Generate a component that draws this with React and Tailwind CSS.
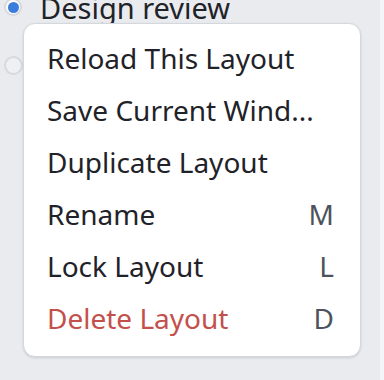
import { useState } from 'react';

const items = [
    { label: 'Reload This Layout' },
    { label: 'Save Current Wind...' },
    { label: 'Duplicate Layout' },
    { label: 'Rename', key: 'M' },
    { label: 'Lock Layout', key: 'L' },
    { label: 'Delete Layout', key: 'D', danger: true },
];

const App = () => {
    const [selected] = useState('design');

    return (
        <div className="relative flex w-[384px] h-[380px] overflow-hidden bg-[#e9ebef] font-['Noto_Sans',sans-serif]">
            {/* Layout list behind the menu */}
            <div className="flex-1 flex flex-col gap-[20px] pl-[4px] -mt-[12px]">
                <div className="flex items-center gap-[18px] h-[38px]">
                    <span className="w-[18px] h-[18px] rounded-full bg-white border-2 border-[#d6d9df] flex items-center justify-center">
                        <span className={`w-[11px] h-[11px] rounded-full ${selected === 'design' ? 'bg-[#3b7ddd]' : ''}`}></span>
                    </span>
                    <span className="text-[29px] text-[#1f2329] leading-none">Design review</span>
                </div>
                <div className="flex items-center gap-[18px] h-[38px]">
                    <span className="w-[19px] h-[19px] rounded-full bg-[#eef0f3] border-2 border-[#d6d9df]"></span>
                </div>
            </div>
            <div className="w-[4px] bg-[#f4f5f7]"></div>

            {/* Context menu */}
            <div className="absolute left-[23px] top-[23px] w-[338px] h-[334px] bg-white border border-[#d3d7de] rounded-[12px] shadow-sm pt-[8px] pb-[12px] pl-[23px] pr-[26px]">
                {items.map(item => (
                    <div key={item.label} className="flex items-center justify-between h-[52px] leading-[52px] text-[28px]">
                        <span className={item.danger ? 'text-[#c4504c]' : 'text-[#1f2329]'}>{item.label}</span>
                        {item.key && <span className="text-[#4d535c]">{item.key}</span>}
                    </div>
                ))}
            </div>
        </div>
    );
};

export default App;
